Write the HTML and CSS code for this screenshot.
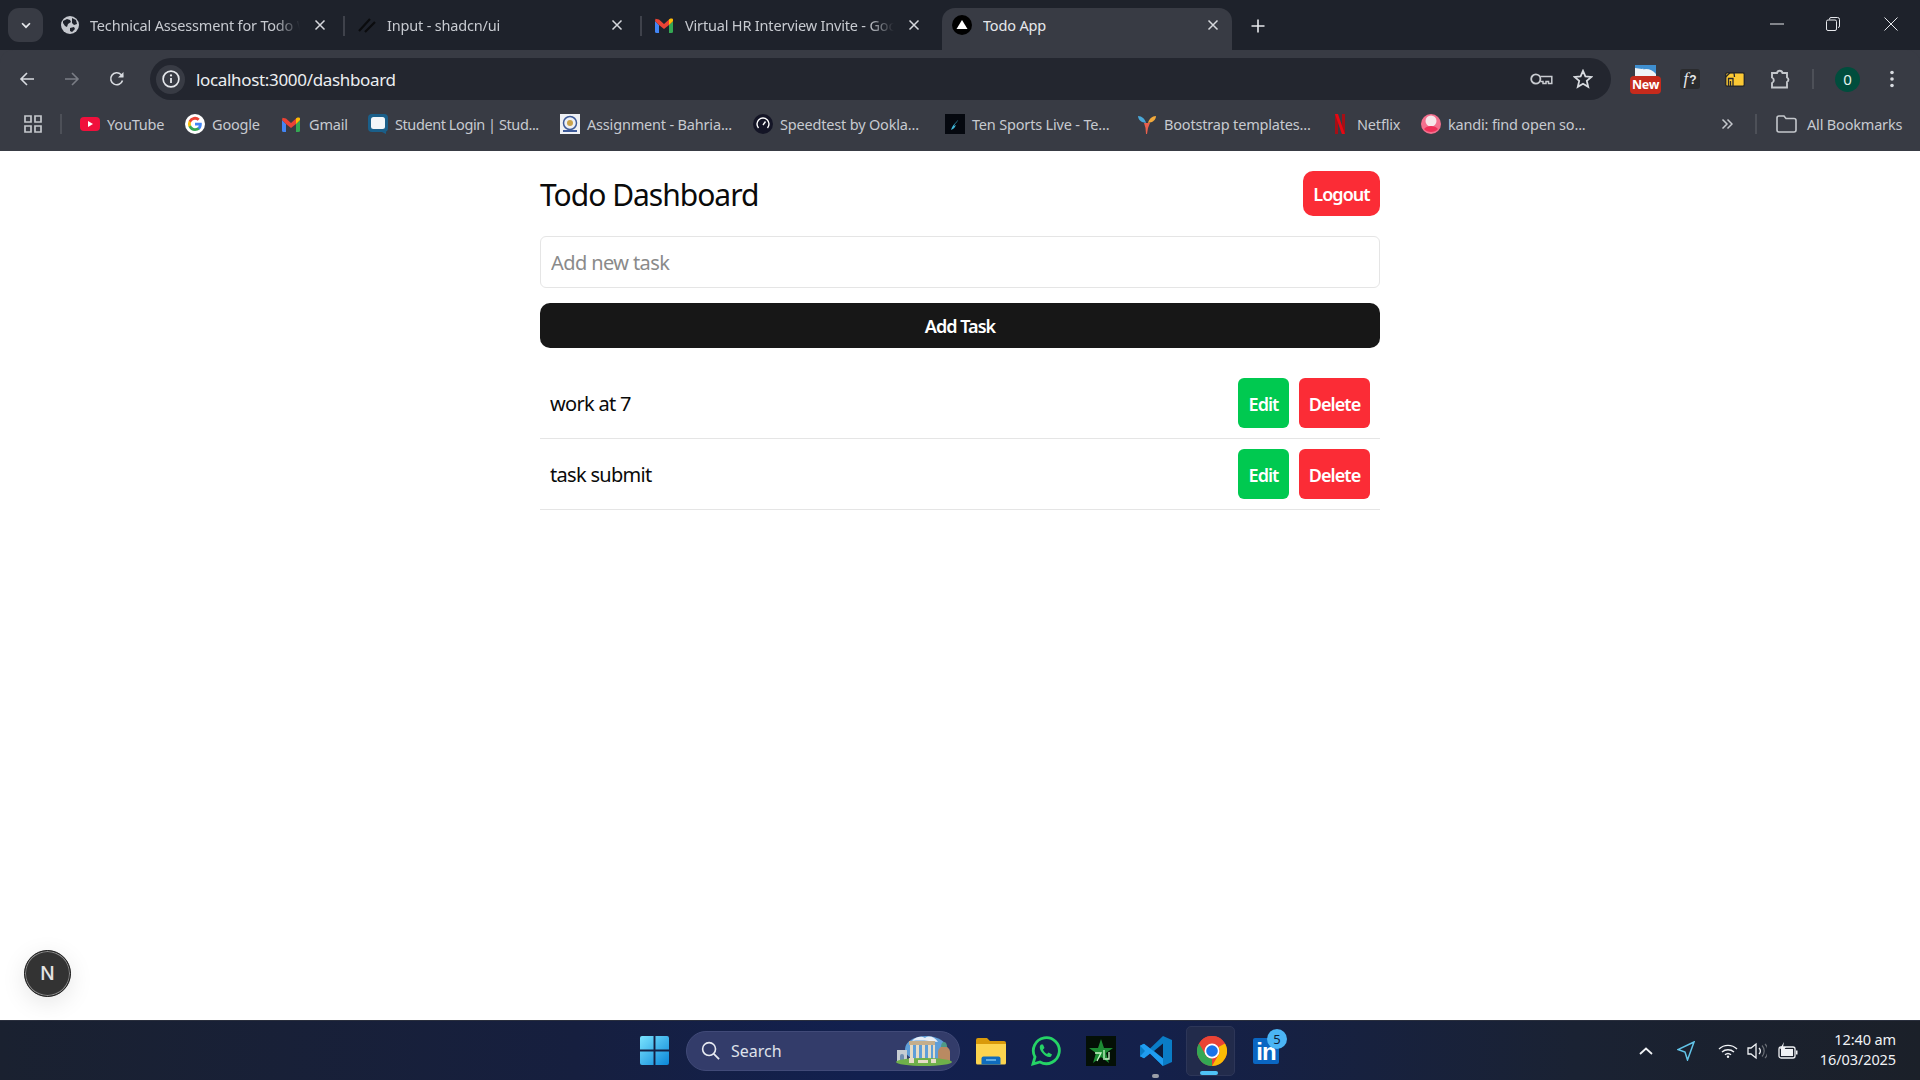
FILE: index.html
```html
<!DOCTYPE html>
<html lang="en">
<head>
<meta charset="utf-8">
<title>Todo App</title>
<link rel="stylesheet" href="styles.css">
</head>
<body>
<div class="screen">
  <header class="chrome">
    <div class="tabstrip">
      <button class="tabsearch"><svg viewBox="0 0 16 16" class="i12"><path d="M3.5 6l4.5 4.5L12.500 6" fill="none" stroke="#e6e8ec" stroke-width="2"/></svg></button>
      <div class="tab tab1">
        <svg viewBox="0 0 18 18" class="fav"><circle cx="9" cy="9" r="9" fill="#c5c8ce"/><path d="M2 5l4-2 3 1 1 2-3 2-1 3-2-1-2-3zM11 2l4 2 1 4-3 1-2-2zM9 12l4-1 1 2-3 3-2-1z" fill="#1e222b"/></svg>
        <span class="tabtitle">Technical Assessment for Todo Web App</span>
        <svg viewBox="0 0 12 12" class="x"><path d="M1.500 1.500l9 9M10.500 1.500l-9 9"/></svg>
      </div>
      <i class="tabsep"></i>
      <div class="tab tab2">
        <svg viewBox="0 0 18 18" class="fav"><path d="M1 15L12 3M7 16L17 6" stroke="#0b0c0e" stroke-width="2.200" fill="none"/></svg>
        <span class="tabtitle">Input - shadcn/ui</span>
        <svg viewBox="0 0 12 12" class="x"><path d="M1.500 1.500l9 9M10.500 1.500l-9 9"/></svg>
      </div>
      <i class="tabsep"></i>
      <div class="tab tab3">
        <svg viewBox="0 0 18 15" class="fav gm"><path d="M0 3v10.500A1.500 1.500 0 0 0 1.500 15H4V7z" fill="#4285f4"/><path d="M14 7v8h2.500a1.500 1.500 0 0 0 1.500-1.500V3z" fill="#34a853"/><path d="M0 3l4 4 5 4 5-4 4-4-.2-2.300L14 1.500 9 6 4 1.500.5.700z" fill="#ea4335"/><path d="M14 1.500V7l4-4V1.800C18 .4 16 0 15 .8z" fill="#fbbc04"/></svg>
        <span class="tabtitle">Virtual HR Interview Invite - Google Mail</span>
        <svg viewBox="0 0 12 12" class="x"><path d="M1.500 1.500l9 9M10.500 1.500l-9 9"/></svg>
      </div>
      <div class="tab active">
        <svg viewBox="0 0 20 20" class="fav fav20"><circle cx="10" cy="10" r="10" fill="#000"/><path d="M10 5l5.500 9h-11z" fill="#fff"/></svg>
        <span class="tabtitle">Todo App</span>
        <svg viewBox="0 0 12 12" class="x"><path d="M1.500 1.500l9 9M10.500 1.500l-9 9"/></svg>
      </div>
      <svg viewBox="0 0 14 14" class="newtab"><path d="M7 .5v13M.5 7h13" stroke="#e6e8ec" stroke-width="1.600"/></svg>
      <div class="winctl">
        <svg viewBox="0 0 14 14" class="win"><path d="M0 7h14" stroke="#e6e8ec" stroke-width="1"/></svg>
        <svg viewBox="0 0 14 14" class="win win-r"><path d="M3.500 2.500V2A1.500 1.500 0 0 1 5 .5h6.500A2 2 0 0 1 13.500 2.500V9A1.500 1.500 0 0 1 12 10.500" fill="none" stroke="#e6e8ec"/><rect x=".5" y="3" width="10" height="10.500" rx="1.500" fill="none" stroke="#e6e8ec"/></svg>
        <svg viewBox="0 0 14 14" class="win"><path d="M.5.500l13 13M13.500.500l-13 13" stroke="#e6e8ec" stroke-width="1"/></svg>
      </div>
    </div>
    <div class="toolbar">
      <svg viewBox="0 0 16 16" class="nav"><path d="M15 8H2M8 2L2 8l6 6" fill="none" stroke="#d8dbe0" stroke-width="1.600"/></svg>
      <svg viewBox="0 0 16 16" class="nav fwd"><path d="M1 8h13M8 2l6 6-6 6" fill="none" stroke="#7a7d85" stroke-width="1.600"/></svg>
      <svg viewBox="0 0 16 16" class="nav rel"><path d="M13.500 9.500A6 6 0 1 1 12 3.500L14 5.500" fill="none" stroke="#d8dbe0" stroke-width="1.600"/><path d="M14.500 1v5.500H9z" fill="#d8dbe0"/></svg>
      <div class="omnibox">
        <span class="siteinfo"><svg viewBox="0 0 16 16" class="i16"><circle cx="8" cy="8" r="7" fill="none" stroke="#e6e8ec" stroke-width="1.500"/><path d="M8 7v4.500" stroke="#e6e8ec" stroke-width="1.600"/><circle cx="8" cy="4.800" r="1" fill="#e6e8ec"/></svg></span>
        <span class="url">localhost:3000/dashboard</span>
        <svg viewBox="0 0 23 14" class="key"><circle cx="5.800" cy="7" r="4.600" fill="none" stroke="#c9ccd1" stroke-width="1.800"/><path d="M10.300 4.500H21.800V11.500H18.500V9.500H16V11.500H13V9.500H10.300" fill="none" stroke="#c9ccd1" stroke-width="1.500"/></svg>
        <svg viewBox="0 0 20 20" class="star"><path d="M10 1.800l2.400 5.600 6 .5-4.600 4 1.400 5.900L10 14.700l-5.200 3.100 1.400-5.900-4.600-4 6-.5z" fill="none" stroke="#d8dbe0" stroke-width="1.800"/></svg>
      </div>
      <div class="exts">
        <span class="ext-new"><svg viewBox="0 0 21 11" class="ext-new-top"><rect width="21" height="11" fill="#eef2f6"/><path d="M0 0h21v9C17 4 11 3 7 5c3-.5 1-1.500 0-1L0 3z" fill="#3f8fd0"/></svg><b class="ext-new-lbl">New</b></span>
        <span class="ext-f"><em class="ext-f-f">f</em>?</span>
        <svg viewBox="0 0 20 15" class="ext-y"><rect x=".7" y=".7" width="18.600" height="13.600" rx="1.500" fill="#fcc934" stroke="#26282e" stroke-width="1.400"/><path d="M.7 5L5 .7h4L9.500 5M3.500 14V6.500H8V14M5.500 14V9" fill="none" stroke="#26282e" stroke-width="1.300"/></svg>
        <svg viewBox="0 0 22 20" class="ext-p"><path d="M2 4h5a2.800 2.800 0 0 1 5.500 0H17v4.500a2.500 2.500 0 0 1 0 4.500V18.500H2V14a3 3 0 0 0 0-5.500z" fill="none" stroke="#c4c7cc" stroke-width="1.900"/></svg>
        <i class="tsep"></i>
        <span class="avatar">0</span>
        <svg viewBox="0 0 4 18" class="kebab"><circle cx="2" cy="2.500" r="1.800" fill="#d8dbe0"/><circle cx="2" cy="9" r="1.800" fill="#d8dbe0"/><circle cx="2" cy="15.500" r="1.800" fill="#d8dbe0"/></svg>
      </div>
    </div>
    <nav class="bookmarks">
      <svg viewBox="0 0 18 18" class="apps"><path d="M1 1h6v6H1zM11 1h6v6h-6zM1 11h6v6H1zM11 11h6v6h-6z" fill="none" stroke="#c4c7cc" stroke-width="1.700"/></svg>
      <i class="bsep"></i>
      <a class="bm bm-yt"><svg viewBox="0 0 20 20" class="bi"><rect y="3" width="20" height="14" rx="4" fill="#f0103c"/><path d="M8 7l5 3-5 3z" fill="#fff"/></svg>YouTube</a>
      <a class="bm bm-g"><svg viewBox="0 0 20 20" class="bi"><circle cx="10" cy="10" r="10" fill="#fff"/><path d="M16.800 10.200c0-.5 0-1-.1-1.400H10v2.700h3.800a3.300 3.300 0 0 1-1.400 2.100v1.800h2.300c1.300-1.300 2.100-3 2.100-5.200z" fill="#4285f4"/><path d="M10 17c1.900 0 3.500-.6 4.700-1.700l-2.300-1.800c-.6.400-1.400.7-2.400.7-1.900 0-3.400-1.200-4-2.900H3.700v1.800A7 7 0 0 0 10 17z" fill="#34a853"/><path d="M6 11.300a4 4 0 0 1 0-2.700V6.800H3.700a7 7 0 0 0 0 6.300z" fill="#fbbc05"/><path d="M10 5.700c1 0 2 .4 2.700 1l2-2A7 7 0 0 0 3.700 6.800L6 8.600c.6-1.700 2.100-2.900 4-2.900z" fill="#ea4335"/></svg>Google</a>
      <a class="bm bm-m"><svg viewBox="0 0 18 15" class="bi gm"><path d="M0 3v10.500A1.500 1.500 0 0 0 1.500 15H4V7z" fill="#4285f4"/><path d="M14 7v8h2.500a1.500 1.500 0 0 0 1.500-1.500V3z" fill="#34a853"/><path d="M0 3l4 4 5 4 5-4 4-4-.2-2.300L14 1.500 9 6 4 1.500.5.700z" fill="#ea4335"/><path d="M14 1.500V7l4-4V1.800C18 .4 16 0 15 .8z" fill="#fbbc04"/></svg>Gmail</a>
      <a class="bm bm-s"><svg viewBox="0 0 20 20" class="bi"><rect width="20" height="18" rx="4" fill="#1a5f8a"/><rect x="3" y="3" width="14" height="12" rx="2.500" fill="#f2f5f8"/><path d="M14 18l4 2v-3z" fill="#1a5f8a"/></svg>Student Login | Stud...</a>
      <a class="bm bm-a"><svg viewBox="0 0 20 20" class="bi"><rect width="20" height="20" fill="#eef0f4"/><circle cx="10" cy="9" r="6.500" fill="none" stroke="#3d5a98" stroke-width="1.500"/><circle cx="10" cy="9" r="3" fill="#c9a24b"/><path d="M3 17h14" stroke="#3d5a98" stroke-width="2"/></svg>Assignment - Bahria...</a>
      <a class="bm bm-sp"><svg viewBox="0 0 20 20" class="bi"><circle cx="10" cy="10" r="10" fill="#141526"/><path d="M5.500 14a6 6 0 1 1 9 0" fill="none" stroke="#fff" stroke-width="1.400"/><path d="M10 11l2.500-3.500" stroke="#fff" stroke-width="1.400"/></svg>Speedtest by Ookla...</a>
      <a class="bm bm-t"><svg viewBox="0 0 20 20" class="bi"><rect width="20" height="20" fill="#05080f"/><path d="M14 4c-1 4-6 5-8 12 3-1 4-3 5-5l-2 1c1-3 4-4 5-8z" fill="#3fb5d8"/></svg>Ten Sports Live - Te...</a>
      <a class="bm bm-b"><svg viewBox="0 0 20 20" class="bi"><path d="M1 2c4 0 7 3 8 7L5 8C3 7 1 5 1 2z" fill="#4aa8d8"/><path d="M19 2c-4 0-7 3-8 7l4-1c2-1 4-3 4-6z" fill="#f2a93b"/><path d="M7 9h6l-2 5-1 6h-1l-.5-6z" fill="#e8604c"/></svg>Bootstrap templates...</a>
      <a class="bm bm-n"><svg viewBox="0 0 12 20" class="bi nf"><path d="M1 0h3v20l-3 .4zM8 0h3v20.400L8 20z" fill="#a50f16"/><path d="M1 0h3l7 20.400H8z" fill="#e50914"/></svg>Netflix</a>
      <a class="bm bm-k"><svg viewBox="0 0 20 20" class="bi"><ellipse cx="10" cy="10" rx="10" ry="10" fill="#f3708e"/><circle cx="10" cy="7" r="5.500" fill="#f7e6ea"/><path d="M3 15c3-4 11-4 14 0-3 4-11 4-14 0z" fill="#ef2f58"/></svg>kandi: find open so...</a>
      <svg viewBox="0 0 12 12" class="more"><path d="M1.500 1.500L6 6l-4.500 4.500M6.500 1.500L11 6l-4.500 4.500" fill="none" stroke="#c4c7cc" stroke-width="1.500"/></svg>
      <i class="bsep bsep2"></i>
      <a class="bm bm-all"><svg viewBox="0 0 21 18" class="folder"><path d="M1 3a2 2 0 0 1 2-2h5l2 2.500h8a2 2 0 0 1 2 2V15a2 2 0 0 1-2 2H3a2 2 0 0 1-2-2z" fill="none" stroke="#c4c7cc" stroke-width="1.600"/></svg>All Bookmarks</a>
    </nav>
  </header>

  <main class="page">
    <div class="wrap">
      <div class="head">
        <h1>Todo Dashboard</h1>
        <button class="btn btn-red logout">Logout</button>
      </div>
      <input class="task-input" placeholder="Add new task">
      <button class="btn add">Add Task</button>
      <ul class="list">
        <li class="row"><span class="rowtext">work at 7</span><div class="acts"><button class="btn-s green">Edit</button><button class="btn-s red">Delete</button></div></li>
        <li class="row"><span class="rowtext">task submit</span><div class="acts"><button class="btn-s green">Edit</button><button class="btn-s red">Delete</button></div></li>
      </ul>
    </div>
    <div class="next">N</div>
  </main>

  <footer class="taskbar">
    <svg viewBox="0 0 30 30" class="start"><defs><linearGradient id="w" x1="0" y1="0" x2="1" y2="1"><stop offset="0" stop-color="#7ae3ff"/><stop offset="1" stop-color="#0a86d8"/></linearGradient></defs><path d="M0 2a2 2 0 0 1 2-2h12v14H0zM16 0h12a2 2 0 0 1 2 2v12H16zM0 16h14v14H2a2 2 0 0 1-2-2zM16 16h14v12a2 2 0 0 1-2 2H16z" fill="url(#w)"/></svg>
    <div class="search">
      <svg viewBox="0 0 20 20" class="sicon"><circle cx="8.500" cy="8.500" r="6.800" fill="none" stroke="#e8ebf2" stroke-width="1.700"/><path d="M13.500 13.500L19 19" stroke="#e8ebf2" stroke-width="1.900"/></svg>
      <span class="stext">Search</span>
      <svg viewBox="0 0 57 30" class="temple"><ellipse cx="30" cy="13" rx="21" ry="13" fill="#5f9ed8"/><path d="M16 5c4-5 10-5 13-3 4-3 10-1 13 4-8-1-18-2-26-1z" fill="#e8eef6"/><path d="M13 5h26v4H13z" fill="#c4ae8c"/><path d="M14 9h3v16h-3zM20 9h3v16h-3zM26 9h3v16h-3zM32 9h3v16h-3zM37 9h2v16h-2z" fill="#e6dcc6"/><path d="M42 16c0-3 3-6 6-6s6 3 6 6v9H42z" fill="#b98a62"/><path d="M45 11c0-3 1-5 3-5s3 2 3 5z" fill="#4f9a86"/><path d="M1 14h10v11H1z" fill="#c6ccd2"/><path d="M4 25v-5a2 2 0 0 1 4 0v5z" fill="#6f8db0"/><ellipse cx="28" cy="26" rx="28" ry="4" fill="#6fb04a"/><path d="M13 22h5v5h-5zM22 24h10v3H22zM35 23h5v4h-5z" fill="#e6dcc6"/></svg>
    </div>
    <svg viewBox="0 0 30 30" class="tb tb-folder"><path d="M0 4a2 2 0 0 1 2-2h9l3 3h14a2 2 0 0 1 2 2v3H0z" fill="#d99a0a"/><path d="M0 8h30v19a1.500 1.500 0 0 1-1.500 1.500h-27A1.500 1.500 0 0 1 0 27z" fill="#fcd44f"/><path d="M5.500 22.500a2 2 0 0 1 2-2h15a2 2 0 0 1 2 2v6h-19z" fill="#0f6cbd"/><path d="M10 24h10" stroke="#8fd0f5" stroke-width="1.300"/></svg>
    <svg viewBox="0 0 30 30" class="tb tb-wa"><path d="M2 28l2-7a13 13 0 1 1 5 5z" fill="none" stroke="#25d366" stroke-width="2.800"/><path d="M10 8.500c-2 1.500-1.500 5 1.500 8.500s6.500 5 8.500 3.500l1-2-3.500-2-1.500 1.500c-1.500-.5-3.500-2.500-4-4.500l1.500-1.500-1.500-3.500z" fill="#25d366"/></svg>
    <svg viewBox="0 0 30 30" class="tb tb-star"><rect width="30" height="30" fill="#041006"/><path d="M15 3l3 9h9l-7 5 3 10-8-6-8 6 3-10-7-5h9z" fill="#1d8c34"/><path d="M9 17h6l-4 8M18 14v10M23 16v7h-4" fill="none" stroke="#c9f5c9" stroke-width="1.300"/></svg>
    <span class="tb-vs"><svg viewBox="0 0 32 32" class="tb tb-code"><path d="M23 1l9 4v22l-9 4L10 18.500l-6 4.700-4-2V10.800l4-2 6 4.700z" fill="#0a7cc6"/><path d="M23 8.500L14 16l9 7.500z" fill="#0d1a3a"/><path d="M0 10.800l4-2L23 23.500V31L10 18.500 4 23.200l-4-2 5-5.200z" fill="#1f9cf0"/></svg><i class="run"></i></span>
    <span class="tb-active"><svg viewBox="0 0 30 30" class="tb"><circle cx="15" cy="15" r="15" fill="#ea4335"/><path d="M15 30A15 15 0 0 1 2 7.500L9 19.500c2 2.500 4 3 6 3z" fill="#34a853"/><path d="M28 7.500A15 15 0 0 1 15 30l7-12c1-2 1-4-.5-7z" fill="#fbbc04"/><path d="M2 7.500A15 15 0 0 1 28 7.500H15A7.500 7.500 0 0 0 8 11.500z" fill="#ea4335"/><circle cx="15" cy="15" r="7.500" fill="#fff"/><circle cx="15" cy="15" r="5.800" fill="#1a73e8"/></svg><i class="run run-on"></i></span>
    <span class="tb-li"><b class="li-in">in</b><b class="li-badge">5</b></span>
    <div class="tray">
      <svg viewBox="0 0 14 8" class="t-chev"><path d="M1 7l6-5.500L13 7" fill="none" stroke="#f0f2f5" stroke-width="1.800"/></svg>
      <svg viewBox="0 0 18 20" class="t-loc"><path d="M17 1L1 8.500l7 2.500 2.500 8z" fill="none" stroke="#62c4e8" stroke-width="1.500"/></svg>
      <svg viewBox="0 0 20 14" class="t-wifi"><path d="M1 5a13 13 0 0 1 18 0M4 8a9 9 0 0 1 12 0M7 10.800a4.500 4.500 0 0 1 6 0" fill="none" stroke="#f0f2f5" stroke-width="1.400"/><circle cx="10" cy="12.800" r="1.200" fill="#f0f2f5"/></svg>
      <svg viewBox="0 0 20 18" class="t-vol"><path d="M1 6h3l5-4v14l-5-4H1z" fill="none" stroke="#f0f2f5" stroke-width="1.300"/><path d="M12 6a4 4 0 0 1 0 6" fill="none" stroke="#f0f2f5" stroke-width="1.300"/><path d="M15 3.500a8 8 0 0 1 0 11M18 2a10 10 0 0 1 0 14" fill="none" stroke="#6b6f76" stroke-width="1.200"/></svg>
      <svg viewBox="0 0 20 18" class="t-bat"><rect x="1" y="5" width="16" height="11" rx="2" fill="none" stroke="#f0f2f5" stroke-width="1.300"/><rect x="3" y="7" width="12" height="7" fill="#f0f2f5"/><path d="M18 8.500h1.500v4H18z" fill="#f0f2f5"/><path d="M6 0L2 7h3l-1 4 4-6H5z" fill="#f0f2f5"/></svg>
      <div class="clock"><span>12:40 am</span><span>16/03/2025</span></div>
    </div>
  </footer>
</div>
</body>
</html>
```

FILE: styles.css
```css
* { box-sizing: border-box; }
html, body { margin: 0; height: 100%; }
body { font-family: "Noto Sans", "Open Sans", sans-serif; background: #fff; overflow: hidden; }
a { text-decoration: none; }
.screen { height: 100vh; display: flex; flex-direction: column; }

/* browser chrome */
.chrome { flex: none; height: 151px; background: #383b44; display: flex; flex-direction: column; font-size: 15px; color: #c7cad0; }
.tabstrip { height: 50px; flex: none; background: #1e222b; display: flex; align-items: flex-start; padding: 8px 0 0 8px; }
.tabsearch { width: 35px; height: 34px; background: #383b44; border: 0; border-radius: 11px; padding: 0; display: flex; align-items: center; justify-content: center; margin-right: 18px; }
.i12 { width: 14px; height: 14px; }
.tab { height: 42px; display: flex; align-items: center; padding-bottom: 8px; flex: none; position: relative; }
.tab1 { width: 265px; }
.tab2 { width: 265px; }
.tab3 { width: 265px; }
.tabsep { flex: none; width: 2px; height: 20px; background: #3f424b; margin: 8px 13px 0 17px; }
.fav { width: 18px; height: 18px; flex: none; margin-right: 11px; }
.fav.gm { height: 15px; margin-right: 12px; }
.fav20 { width: 20px; height: 20px; }
.tabtitle { flex: 1; min-width: 0; white-space: nowrap; overflow: hidden; font-size: 14.500px; letter-spacing: -.18px; color: #c7cad0; -webkit-mask-image: linear-gradient(90deg, #000 88%, transparent); mask-image: linear-gradient(90deg, #000 88%, transparent); }
.x { width: 12px; height: 12px; flex: none; margin-left: 14px; fill: none; stroke: #d6d8dd; stroke-width: 1.500; }
.tab.active { width: 290px; margin-left: 22px; padding: 0 13px 8px 10px; background: #383b44; border-radius: 13px 13px 0 0; }
.tab.active .tabtitle { color: #e6e8ec; -webkit-mask-image: none; mask-image: none; }
.newtab { width: 14px; height: 14px; flex: none; margin: 11px 0 0 19px; }
.winctl { margin-left: auto; display: flex; gap: 42px; padding: 9px 22px 0 0; }
.win { width: 14px; height: 14px; display: block; }
.win-r { margin-right: 2px; }

.toolbar { height: 50px; flex: none; display: flex; align-items: center; padding: 0 0 0 19px; border-radius: 13px 13px 0 0; background: #383b44; }
.nav { width: 16px; height: 16px; flex: none; margin-right: 29px; margin-top: 8px; }
.nav.rel { margin-right: 24px; }
.omnibox { width: 1461px; height: 42px; margin-top: 8px; margin-left: 1px; background: #23262f; border-radius: 21px; display: flex; align-items: center; padding: 0 18px 0 6px; flex: none; }
.siteinfo { width: 29px; height: 29px; border-radius: 50%; background: #383b44; display: flex; align-items: center; justify-content: center; margin-right: 11px; flex: none; }
.i16 { width: 18px; height: 18px; }
.url { font-size: 17px; letter-spacing: -.33px; color: #eceef1; flex: 1; }
.key { width: 23px; height: 14px; margin-right: 20px; flex: none; }
.star { width: 20px; height: 20px; flex: none; }
.exts { flex: 1; display: flex; align-items: center; margin-top: 8px; padding-left: 19px; }
.ext-new { width: 31px; height: 29px; position: relative; flex: none; display: block; margin-right: 19px; }
.ext-new-top { position: absolute; left: 5px; top: 0; width: 21px; height: 11px; display: block; }
.ext-new-lbl { position: absolute; left: 0; right: 0; bottom: 0; height: 18px; background: #c62a1c; border-radius: 4px; color: #fff; font-size: 12.500px; line-height: 18px; text-align: center; letter-spacing: -.3px; }
.ext-f { width: 20px; height: 20px; background: #2a2b2e; color: #e8e8e8; font: 700 12px/20px "Liberation Sans", sans-serif; text-align: center; border-radius: 3px; margin-right: 25px; flex: none; }
.ext-f-f { font: italic 400 17px/20px "Liberation Serif", serif; margin-right: 1px; }
.ext-y { width: 20px; height: 15px; margin-right: 25px; flex: none; }
.ext-p { width: 22px; height: 20px; margin-right: 20px; flex: none; }
.tsep { width: 2px; height: 20px; background: #4d5058; margin-right: 21px; flex: none; }
.avatar { width: 25px; height: 25px; border-radius: 50%; background: #004d3d; color: #e6f4ef; font-size: 15px; line-height: 25px; text-align: center; margin-right: 30px; flex: none; }
.kebab { width: 4px; height: 18px; flex: none; }

.bookmarks { height: 51px; flex: none; display: flex; align-items: center; padding: 0 0 3px 24px; }
.apps { width: 18px; height: 18px; flex: none; margin-right: 18px; }
.bsep { width: 2px; height: 20px; background: #4d5058; flex: none; margin-right: 18px; }
.bm { display: flex; align-items: center; gap: 7px; flex: none; white-space: nowrap; color: #c7cad0; font-size: 14.500px; letter-spacing: -.18px; }
.bi { width: 20px; height: 20px; flex: none; }
.bi.gm { width: 18px; height: 15px; margin-right: 2px; }
.bi.nf { width: 12px; margin-right: 4px; }
.bm-yt { width: 105px; }
.bm-g { width: 97px; }
.bm-m { width: 86px; }
.bm-s { width: 192px; letter-spacing: -.42px; }
.bm-a { width: 193px; }
.bm-sp { width: 192px; }
.bm-t { width: 192px; }
.bm-b { width: 197px; }
.bm-n { width: 87px; }
.bm-k { width: 300px; }
.more { width: 12px; height: 12px; margin-right: 22px; flex: none; }
.bsep2 { margin-right: 19px; }
.folder { width: 21px; height: 18px; flex: none; margin-right: 3px; }

/* page */
.page { flex: 1; min-height: 0; background: #fff; position: relative; color: #0a0a0a; }
.wrap { width: 840px; margin: 0 auto; padding-top: 20px; display: flex; flex-direction: column; }
.head { display: flex; justify-content: space-between; align-items: center; }
h1 { margin: 0; padding-top: 3px; font-size: 30px; font-weight: 400; letter-spacing: -1px; line-height: 42px; }
.btn { height: 45px; border: 0; color: #fff; border-radius: 10px; font: 600 18px "Noto Sans", sans-serif; letter-spacing: -.95px; padding: 0; }
.btn-red { background: #fb2c36; }
.logout { width: 77px; }
.task-input { height: 52px; margin-top: 20px; border: 1px solid #e5e5e5; border-radius: 6px; padding: 0 10px; font: 400 20px "Noto Sans", sans-serif; letter-spacing: -.6px; outline: 0; color: #0a0a0a; }
.task-input::placeholder { color: #8a8a8a; opacity: 1; }
.add { margin-top: 15px; background: #171717; }
.list { list-style: none; margin: 20px 0 0; padding: 0; }
.row { height: 71px; display: flex; align-items: center; justify-content: space-between; padding: 0 10px 1px; border-bottom: 1px solid #e5e5e5; font-size: 20px; letter-spacing: -.7px; }
.rowtext { padding-top: 2px; }
.acts { display: flex; gap: 10px; }
.btn-s { height: 50px; border: 0; border-radius: 6px; color: #fff; font: 600 18px/52px "Noto Sans", sans-serif; letter-spacing: -.95px; padding: 0; }
.green { width: 51px; background: #00c950; }
.red { width: 71px; background: #fb2c36; }
.next { position: absolute; left: 24px; bottom: 23px; width: 47px; height: 47px; border-radius: 50%; background: #333; border: 1px solid #1a1a1a; box-shadow: 0 0 0 1px #8a8a8a inset, 0 6px 24px rgba(0,0,0,.1); color: #e4e4e4; font: 500 19px/45px "Inter", sans-serif; text-align: center; }

/* taskbar */
.taskbar { flex: none; height: 60px; border-top: 1px solid #2a2f3d; background: linear-gradient(90deg, #1a2130 0, #161f3f 30%, #12204f 45%, #14204a 60%, #1a2233 82%, #1b2029 100%); display: flex; align-items: center; padding-left: 640px; color: #f0f2f5; }
.start { width: 29px; height: 29px; flex: none; margin-right: 17px; }
.search { width: 274px; height: 40px; flex: none; background: #333c6a; border: 1px solid #414a78; border-radius: 20px; display: flex; align-items: center; padding-left: 14px; margin-right: 16px; }
.sicon { width: 19px; height: 19px; flex: none; margin-right: 11px; }
.stext { flex: 1; font-size: 16px; color: #dfe2ea; }
.temple { width: 57px; height: 30px; flex: none; margin-right: 6px; }
.tb { width: 30px; height: 30px; flex: none; display: block; }
.tb-folder { margin-right: 25px; }
.tb-wa { margin-right: 25px; }
.tb-star { margin-right: 24px; }
.tb-vs { width: 32px; height: 50px; flex: none; position: relative; display: flex; align-items: center; margin-right: 14px; }
.tb-code { width: 32px; height: 32px; }
.run { position: absolute; bottom: -2px; left: 12px; width: 7px; height: 4px; border-radius: 2px; background: #9a9ea8; }
.tb-active { width: 49px; height: 50px; flex: none; position: relative; display: flex; align-items: center; padding-left: 10px; background: #222b4b; border: 1px solid #2d3658; border-radius: 5px; margin-right: 18px; }
.run-on { left: 13px; width: 18px; bottom: 0; background: #4fc3f7; }
.tb-li { width: 26px; height: 26px; flex: none; position: relative; background: #0a66c2; display: block; border-radius: 2px; }
.li-in { display: block; color: #fff; font: 700 24px/27px "Liberation Sans", sans-serif; text-align: center; letter-spacing: -1px; }
.li-badge { position: absolute; right: -8px; top: -9px; width: 20px; height: 20px; border-radius: 50%; background: #4bb5f5; color: #10203a; font: 400 13px/20px "Noto Sans", sans-serif; text-align: center; }
.tray { margin-left: auto; display: flex; align-items: center; padding-right: 24px; }
.t-chev { width: 14px; height: 8px; margin-right: 24px; flex: none; }
.t-loc { width: 18px; height: 20px; margin-right: 23px; flex: none; }
.t-wifi { width: 20px; height: 14px; margin-right: 9px; flex: none; }
.t-vol { width: 20px; height: 18px; margin-right: 11px; flex: none; }
.t-bat { width: 20px; height: 18px; margin-right: 22px; flex: none; }
.clock { display: flex; flex-direction: column; align-items: flex-end; font-size: 14.500px; line-height: 20px; color: #f0f2f5; letter-spacing: -.1px; padding-bottom: 4px; }
```
